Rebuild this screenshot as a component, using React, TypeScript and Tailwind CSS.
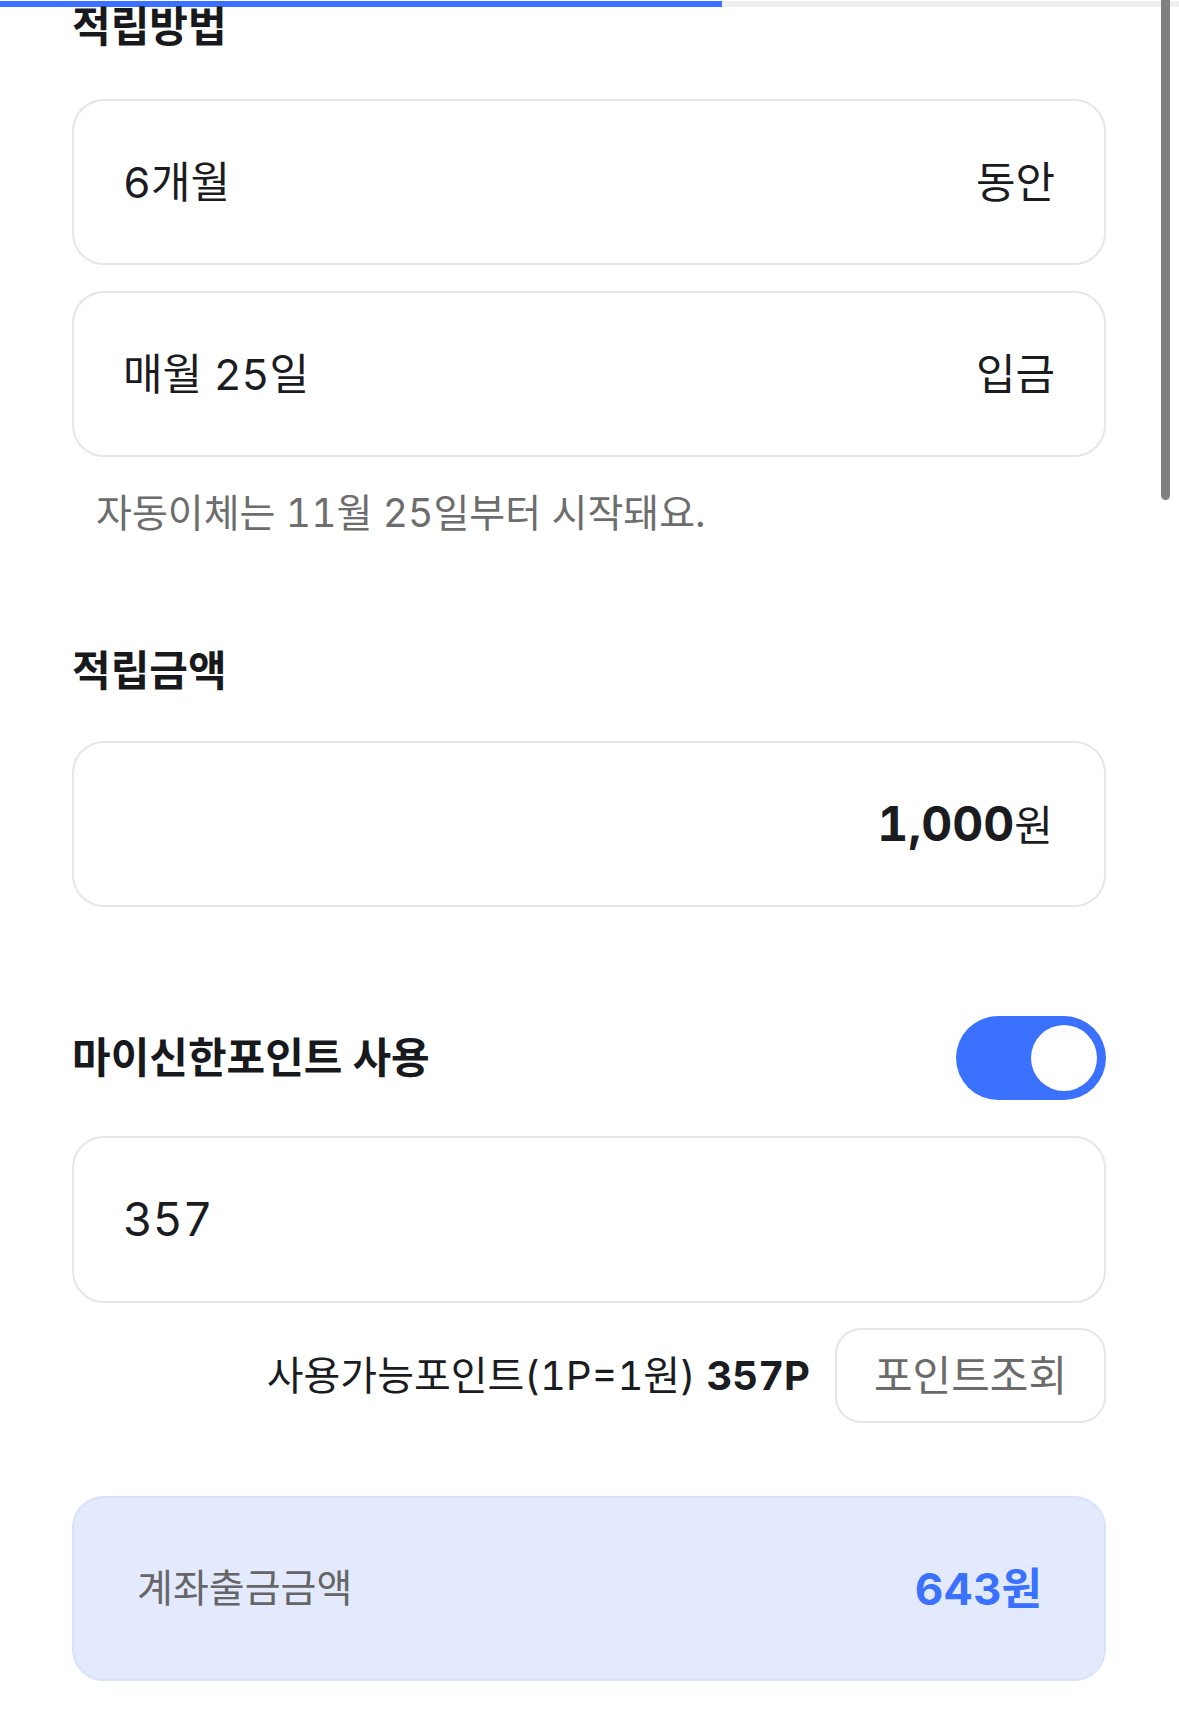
import { useState } from "react";

const boxClass =
  "flex h-[166px] items-center justify-between rounded-[32px] border-2 border-[#e6e6e6] bg-white px-[49px] text-[43px] text-[#1a1c1f] tabular-nums";

function SectionTitle({ children }: { children: React.ReactNode }) {
  return <h2 className="text-[42px] font-bold leading-[40px] text-[#17191c]">{children}</h2>;
}

function Toggle({ on, onChange }: { on: boolean; onChange: (v: boolean) => void }) {
  return (
    <button
      type="button"
      onClick={() => onChange(!on)}
      className={`flex h-[84px] w-[150px] items-center rounded-full p-[9px] transition ${
        on ? "justify-end bg-[#3a71fe]" : "justify-start bg-[#d9d9d9]"
      }`}
    >
      <span className="block h-[66px] w-[66px] rounded-full bg-white" />
    </button>
  );
}

export default function App() {
  const [usePoint, setUsePoint] = useState(true);

  return (
    <div className="relative h-[1714px] w-full overflow-hidden bg-white font-['Inter','Noto_Sans_CJK_KR',sans-serif]">
      <div className="mt-[1px] h-[6px] w-full bg-[#efefef]">
        <div className="h-full w-[722px] bg-[#3a71fe]" />
      </div>

      <div className="absolute right-[9px] top-0 h-[500px] w-[9px] rounded-b-full bg-[#808080]" />

      <div className="pl-[72px] pr-[73px]">
        <SectionTitle>적립방법</SectionTitle>

        <div className={`${boxClass} mt-[52px]`}>
          <span>6개월</span>
          <span>동안</span>
        </div>
        <div className={`${boxClass} mt-[26px]`}>
          <span>매월 25일</span>
          <span>입금</span>
        </div>
        <p className="mt-[36px] pl-[24px] text-[39px] leading-[40px] text-[#6d6d6d] tabular-nums">
          자동이체는 11월 25일부터 시작돼요.
        </p>

        <div className="mt-[118px]">
          <SectionTitle>적립금액</SectionTitle>
        </div>
        <div className={`${boxClass} mt-[50px] justify-end pr-[51px]`}>
          <span className="flex items-baseline">
            <span className="text-[48px] font-bold">1,000</span>
            <span className="text-[42px]">원</span>
          </span>
        </div>

        <div className="mt-[109px] flex items-center justify-between">
          <SectionTitle>마이신한포인트 사용</SectionTitle>
          <Toggle on={usePoint} onChange={setUsePoint} />
        </div>

        <div className={`${boxClass} mt-[36px] h-[167px]`}>
          <span className="text-[46px]">357</span>
        </div>

        <div className="mt-[25px] flex items-center justify-end gap-[25px]">
          <p className="text-[40px] text-[#1a1c1f] tabular-nums">
            사용가능포인트(1P=1원) <span className="font-bold">357P</span>
          </p>
          <button
            type="button"
            className="flex h-[95px] w-[271px] items-center justify-center rounded-[26px] border-2 border-[#e6e6e6] bg-white text-[42px] text-[#6b6b6b]"
          >
            포인트조회
          </button>
        </div>

        <div className="mt-[73px] flex h-[185px] items-center justify-between rounded-[32px] border-2 border-[#d8e2fd] bg-[#e3eafe] pl-[63px] pr-[62px]">
          <span className="text-[39px] text-[#666666]">계좌출금금액</span>
          <span className="text-[44px] font-bold text-[#3a71fe]">643원</span>
        </div>
      </div>
    </div>
  );
}
